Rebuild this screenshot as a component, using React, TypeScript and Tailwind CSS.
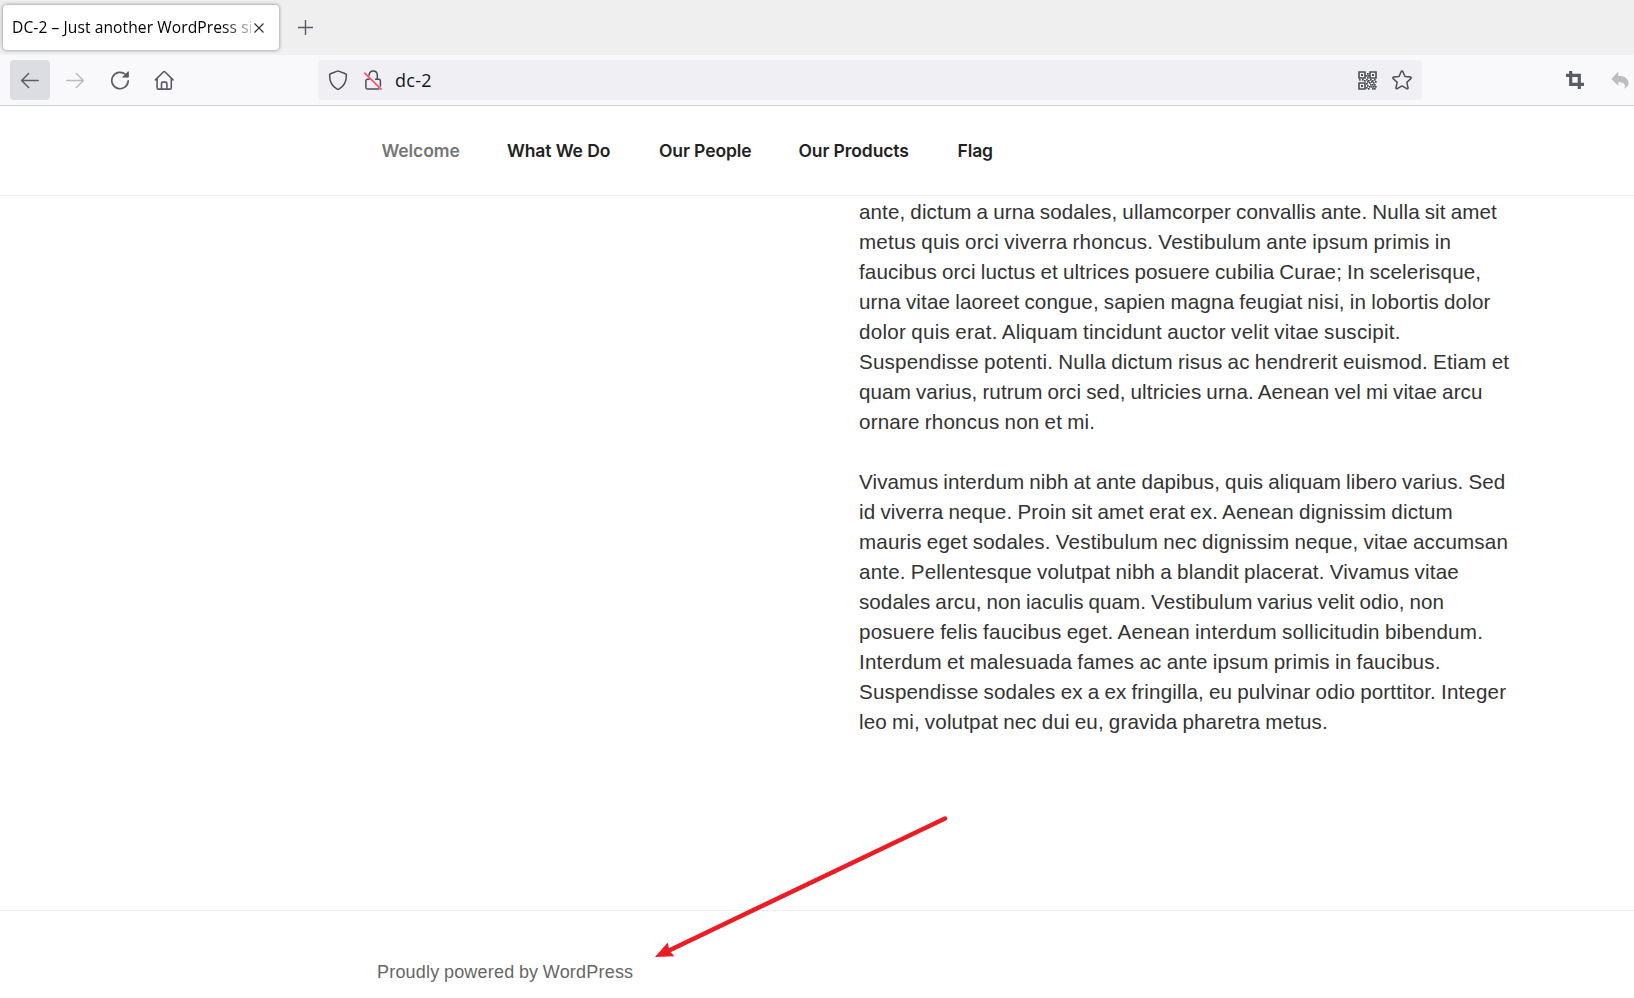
import React from "react";

type Line = { text: string; tracking: string };

const firstParagraph: Line[] = [
  { text: "ante, dictum a urna sodales, ullamcorper convallis ante. Nulla sit amet", tracking: "tracking-[0.1px]" },
  { text: "metus quis orci viverra rhoncus. Vestibulum ante ipsum primis in", tracking: "tracking-[0.209px]" },
  { text: "faucibus orci luctus et ultrices posuere cubilia Curae; In scelerisque,", tracking: "tracking-[0.143px]" },
  { text: "urna vitae laoreet congue, sapien magna feugiat nisi, in lobortis dolor", tracking: "tracking-[0.155px]" },
  { text: "dolor quis erat. Aliquam tincidunt auctor velit vitae suscipit.", tracking: "tracking-[0.252px]" },
  { text: "Suspendisse potenti. Nulla dictum risus ac hendrerit euismod. Etiam et", tracking: "tracking-[0.186px]" },
  { text: "quam varius, rutrum orci sed, ultricies urna. Aenean vel mi vitae arcu", tracking: "tracking-[0.106px]" },
  { text: "ornare rhoncus non et mi.", tracking: "tracking-[0.19px]" },
];

const secondParagraph: Line[] = [
  { text: "Vivamus interdum nibh at ante dapibus, quis aliquam libero varius. Sed", tracking: "tracking-[0.097px]" },
  { text: "id viverra neque. Proin sit amet erat ex. Aenean dignissim dictum", tracking: "tracking-[0.156px]" },
  { text: "mauris eget sodales. Vestibulum nec dignissim neque, vitae accumsan", tracking: "tracking-[0.164px]" },
  { text: "ante. Pellentesque volutpat nibh a blandit placerat. Vivamus vitae", tracking: "tracking-[0.172px]" },
  { text: "sodales arcu, non iaculis quam. Vestibulum varius velit odio, non", tracking: "tracking-[0.058px]" },
  { text: "posuere felis faucibus eget. Aenean interdum sollicitudin bibendum.", tracking: "tracking-[0.223px]" },
  { text: "Interdum et malesuada fames ac ante ipsum primis in faucibus.", tracking: "tracking-[0.196px]" },
  { text: "Suspendisse sodales ex a ex fringilla, eu pulvinar odio porttitor. Integer", tracking: "tracking-[0.144px]" },
  { text: "leo mi, volutpat nec dui eu, gravida pharetra metus.", tracking: "tracking-[0.136px]" },
];

const navItems = [
  { label: "Welcome", style: "w-[125.5px] text-[#767676]" },
  { label: "What We Do", style: "w-[152px] text-[#222]" },
  { label: "Our People", style: "w-[139.5px] text-[#222]" },
  { label: "Our Products", style: "w-[159px] text-[#222]" },
  { label: "Flag", style: "text-[#222]" },
];

function Paragraph({ lines }: { lines: Line[] }) {
  return (
    <p className="text-[20.6px] leading-[30px] whitespace-nowrap text-[#333] [word-spacing:-0.8px]">
      {lines.map((line) => (
        <span key={line.text} className={`block ${line.tracking}`}>
          {line.text}
        </span>
      ))}
    </p>
  );
}

const stroke = { fill: "none", stroke: "currentColor", strokeWidth: 1.5, strokeLinecap: "round", strokeLinejoin: "round" } as const;

function BackIcon() {
  return (
    <svg className="size-5" viewBox="0 0 20 20" {...stroke}>
      <path d="M18.2 10.500H1.800M8.600 3.500 1.600 10.500l7 7" />
    </svg>
  );
}

function ForwardIcon() {
  return (
    <svg className="size-5" viewBox="0 0 20 20" {...stroke}>
      <path d="M1.800 10.500h16.400M11.400 3.500l7 7-7 7" />
    </svg>
  );
}

function ReloadIcon() {
  return (
    <svg className="size-5" viewBox="0 0 20 20" {...stroke} strokeWidth={1.7}>
      <path d="M18.200 10.900a8.200 8.200 0 1 1-2.600-6.400" />
      <path d="M18.300 2v5.100h-5.200z" fill="currentColor" strokeWidth="1" />
    </svg>
  );
}

function HomeIcon() {
  return (
    <svg className="size-5" viewBox="0 0 20 20" {...stroke} strokeWidth={1.6}>
      <path d="M1.400 9.900 9.300 2a1.300 1.300 0 0 1 1.800 0L19 9.900M3.100 8.600v9.100c0 .8.600 1.400 1.400 1.400h11.400c.8 0 1.400-.6 1.400-1.400V8.600M7.500 18.800v-5.400c0-.8.600-1.300 1.300-1.300h2.800c.7 0 1.300.5 1.300 1.300v5.400" />
    </svg>
  );
}

function ShieldIcon() {
  return (
    <svg className="size-5" viewBox="0 0 20 20" {...stroke}>
      <path d="M9.400 1.100a1.400 1.400 0 0 1 1.200 0l6.900 2.600c.5.2.9.7.9 1.300 0 7.300-2.600 11.600-7.600 14.200a1.700 1.700 0 0 1-1.600 0C4.200 16.600 1.600 12.300 1.600 5c0-.6.4-1.100.9-1.300z" />
    </svg>
  );
}

function InsecureLockIcon() {
  return (
    <svg className="h-5 w-[18px]" viewBox="0 0 18 20" {...stroke}>
      <path d="M5.100 5.200C5.300 2.600 6.800.9 9.100.9c2.600 0 4.200 1.800 4.200 4.400v3.900M5.100 9.200H3.600c-1 0-1.700.7-1.700 1.700v6.500c0 1 .7 1.700 1.700 1.700h11.100M11.500 9.200h3.200c1 0 1.700.7 1.700 1.700v5" />
      <path d="m.8 3.200 16.200 16" stroke="#ff4f6e" strokeWidth="1.700" />
    </svg>
  );
}

const qrDots = [
  [8, 4], [10, 4], [9, 2], [9, 6], [1, 8], [4, 8], [6, 9], [8, 8], [10, 9], [12, 8], [14, 9], [16, 8],
  [8, 12], [9, 10], [11, 11], [13, 10], [15, 11], [17, 10], [12, 13], [14, 13], [16, 13], [9, 14],
  [11, 15], [13, 15], [15, 15], [17, 15], [8, 16], [10, 17], [14, 17], [16, 17],
];

function QrIcon() {
  return (
    <svg className="size-[19px]" viewBox="0 0 19 19" fill="none" stroke="currentColor" strokeWidth="1.600">
      <path d="M1 1h6v6H1zM12 1h6v6h-6zM1 12h6v6H1z" />
      <path d="M3 3h2v2H3zM14 3h2v2h-2zM3 14h2v2H3z" fill="currentColor" stroke="none" />
      {qrDots.map(([x, y]) => (
        <rect key={`${x}-${y}`} x={x} y={y} width="1.700" height="1.700" fill="currentColor" stroke="none" />
      ))}
    </svg>
  );
}

function StarIcon() {
  return (
    <svg className="size-5" viewBox="0 0 20 20" {...stroke}>
      <path d="M9.200 1.500c.3-.7 1.300-.7 1.600 0l2.200 5 5.300.6c.8.1 1.100 1 .5 1.500l-4 3.600 1.200 5.600c.2.800-.6 1.300-1.300.9L10 15.900l-4.700 2.800c-.7.4-1.500-.1-1.300-.9l1.200-5.600-4-3.600c-.6-.5-.3-1.400.5-1.500l5.300-.6z" />
    </svg>
  );
}

function CropIcon() {
  return (
    <svg className="size-[18px]" viewBox="0 0 18 18" fill="none" stroke="currentColor" strokeWidth="3.200">
      <path d="M4.700 0v13.300H18M0 4.300h13.300V18" />
    </svg>
  );
}

function UndoIcon() {
  return (
    <svg className="size-[18px]" viewBox="0 0 18 18" fill="currentColor">
      <path d="M7.300.6v4.100c6.300.1 10.200 3 10.200 7.400 0 2.300-1.500 4.200-4.200 5.600 1.700-3.400.7-6.600-6-6.800v4.200L.4 7.900z" />
    </svg>
  );
}

export default function App() {
  return (
    <div className="relative flex h-[998px] w-[1634px] flex-col overflow-hidden bg-white font-['Liberation_Sans',sans-serif]">
      <div className="flex h-[55px] shrink-0 items-start bg-[#efefef] pt-[5px] pl-[3px]">
        <div className="flex h-[45px] w-[276px] items-center rounded-[4px] bg-white pl-[9px] shadow-[0_0_3px_1px_rgba(128,128,142,0.6)]">
          <span className="w-[239px] overflow-hidden bg-linear-to-r from-black from-[88%] to-transparent to-[104%] bg-clip-text font-['Open_Sans',sans-serif] text-[15.6px] tracking-[0.08px] whitespace-nowrap text-transparent">
            DC-2 – Just another WordPress site
          </span>
          <svg className="ml-[3px] size-[10px] text-[#333]" viewBox="0 0 10 10" stroke="currentColor" strokeWidth="1.200">
            <path d="m.5.5 9 9m0-9-9 9" />
          </svg>
        </div>
        <svg className="mt-[15px] ml-[19px] size-[15px] text-[#5b5b66]" viewBox="0 0 15 15" stroke="currentColor" strokeWidth="1.400">
          <path d="M0 7.500h15M7.500 0v15" />
        </svg>
      </div>

      <div className="flex h-[51px] shrink-0 items-center border-b border-[#ccc] bg-[#f9f9fb] pl-[10px] text-[#5b5b66]">
        <div className="flex size-10 items-center justify-center rounded-[4px] bg-[#dcdde3]">
          <BackIcon />
        </div>
        <div className="ml-[15px] text-[#bbbbc0]">
          <ForwardIcon />
        </div>
        <div className="ml-[25px]">
          <ReloadIcon />
        </div>
        <div className="ml-[24px]">
          <HomeIcon />
        </div>
        <div className="ml-[144px] flex h-10 w-[1104px] items-center rounded-[4px] bg-[#f0f0f4] px-[10px] text-[#4c4c55]">
          <ShieldIcon />
          <div className="ml-[16px]">
            <InsecureLockIcon />
          </div>
          <span className="ml-[13px] flex-1 font-['Open_Sans',sans-serif] text-[18px] tracking-[0.3px] text-[#15141a]">dc-2</span>
          <QrIcon />
          <div className="ml-[15px]">
            <StarIcon />
          </div>
        </div>
        <div className="ml-[144px]">
          <CropIcon />
        </div>
        <div className="ml-[27px] text-[#bdbdc1]">
          <UndoIcon />
        </div>
      </div>

      <nav className="flex h-[90px] shrink-0 items-center border-b border-[#eee] pt-[2px] pl-[381.5px] font-['Inter',sans-serif] text-[17.5px] font-semibold tracking-[-0.1px]">
        {navItems.map((item) => (
          <a key={item.label} className={item.style}>
            {item.label}
          </a>
        ))}
      </nav>

      <main className="flex h-[714px] shrink-0 flex-col gap-[30px] pt-px pl-[859px]">
        <Paragraph lines={firstParagraph} />
        <Paragraph lines={secondParagraph} />
      </main>

      <footer className="flex-1 border-t border-[#eee] pt-[48px] pl-[377px] text-[18px] leading-[27px] tracking-[0.2px] text-[#666] [word-spacing:-0.7px]">
        Proudly powered by WordPress
      </footer>

      <svg className="absolute top-[810px] left-[650px] h-[155px] w-[305px]" viewBox="650 810 305 155" fill="#ed1c24">
        <path d="M945 818.500 667 951.500" stroke="#ed1c24" strokeWidth="4.500" strokeLinecap="round" />
        <path d="m655 957 12.700-14.500 1.800 8.500 5 5.300z" />
      </svg>
    </div>
  );
}
